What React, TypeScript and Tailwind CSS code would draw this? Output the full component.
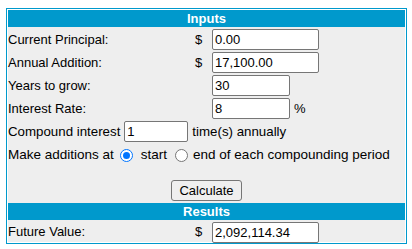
import React from "react";

function Field({ value, w }: { value: string; w: string }) {
  return (
    <div
      className={`${w} h-[21px] shrink-0 border border-[#767676] rounded-[2px] bg-white px-[2px] flex items-center text-[13px] leading-none text-black`}
    >
      {value}
    </div>
  );
}

function Radio({ checked }: { checked?: boolean }) {
  return checked ? (
    <span className="w-[13px] h-[13px] rounded-full border-[1.5px] border-[#0075ff] bg-white flex items-center justify-center shrink-0">
      <span className="block w-[7px] h-[7px] rounded-full bg-[#0075ff]" />
    </span>
  ) : (
    <span className="block w-[13px] h-[13px] rounded-full border border-[#767676] bg-white shrink-0" />
  );
}

function Row({
  label,
  dollar,
  value,
  w,
  suffix,
}: {
  label: string;
  dollar?: boolean;
  value: string;
  w: string;
  suffix?: string;
}) {
  return (
    <div className="h-[23px] flex items-start">
      <div className="w-[186px] h-[21px] flex items-center shrink-0">{label}</div>
      <div className="w-[18px] h-[21px] flex items-center pl-[1px] shrink-0">{dollar ? "$" : ""}</div>
      <Field value={value} w={w} />
      {suffix && <div className="h-[21px] flex items-center ml-[4px]">{suffix}</div>}
    </div>
  );
}

export default function App() {
  return (
    <div
      className="bg-white w-[412px] h-[249px] pt-[8px] pl-[6px] text-[13px] text-black"
      style={{ fontFamily: '"Liberation Sans", Arial, sans-serif' }}
    >
      <div className="w-[401px] border border-[#0099cc] p-px bg-white">
        <div className="h-[17px] bg-[#0099cc] text-white font-bold flex items-center justify-center leading-none">
          Inputs
        </div>
        <div className="bg-[#eeeeee] h-[176px] pt-[2px]">
          <Row label="Current Principal:" dollar value="0.00" w="w-[107px]" />
          <Row label="Annual Addition:" dollar value="17,100.00" w="w-[107px]" />
          <Row label="Years to grow:" value="30" w="w-[78px]" />
          <Row label="Interest Rate:" value="8" w="w-[78px]" suffix="%" />
          <div className="h-[23px] flex items-start">
            <div className="h-[21px] flex items-center text-[13.3px]">Compound interest</div>
            <div className="ml-[4px]">
              <Field value="1" w="w-[64px]" />
            </div>
            <div className="h-[21px] flex items-center ml-[4px] text-[13.3px]">time(s) annually</div>
          </div>
          <div className="h-[23px] flex items-center text-[13.5px]">
            <span>Make additions at</span>
            <span className="ml-[6px]">
              <Radio checked />
            </span>
            <span className="ml-[8px]">start</span>
            <span className="ml-[8px]">
              <Radio />
            </span>
            <span className="ml-[5px]">end of each compounding period</span>
          </div>
          <div className="flex justify-center mt-[13px]">
            <div className="w-[71px] h-[21px] border border-[#767676] rounded-[3px] bg-[#efefef] flex items-center justify-center">
              Calculate
            </div>
          </div>
        </div>
        <div className="h-[17px] bg-[#0099cc] text-white font-bold flex items-center justify-center leading-none">
          Results
        </div>
        <div className="bg-[#eeeeee] h-[22px] pt-[2px]">
          <div className="flex items-start">
            <div className="w-[186px] h-[20px] flex items-center shrink-0">Future Value:</div>
            <div className="w-[18px] h-[20px] flex items-center pl-[1px] shrink-0">$</div>
            <div className="w-[107px] h-[21px] shrink-0 border border-[#767676] rounded-[2px] bg-white px-[2px] flex items-center leading-none relative">
              2,092,114.34
            </div>
          </div>
        </div>
      </div>
    </div>
  );
}
